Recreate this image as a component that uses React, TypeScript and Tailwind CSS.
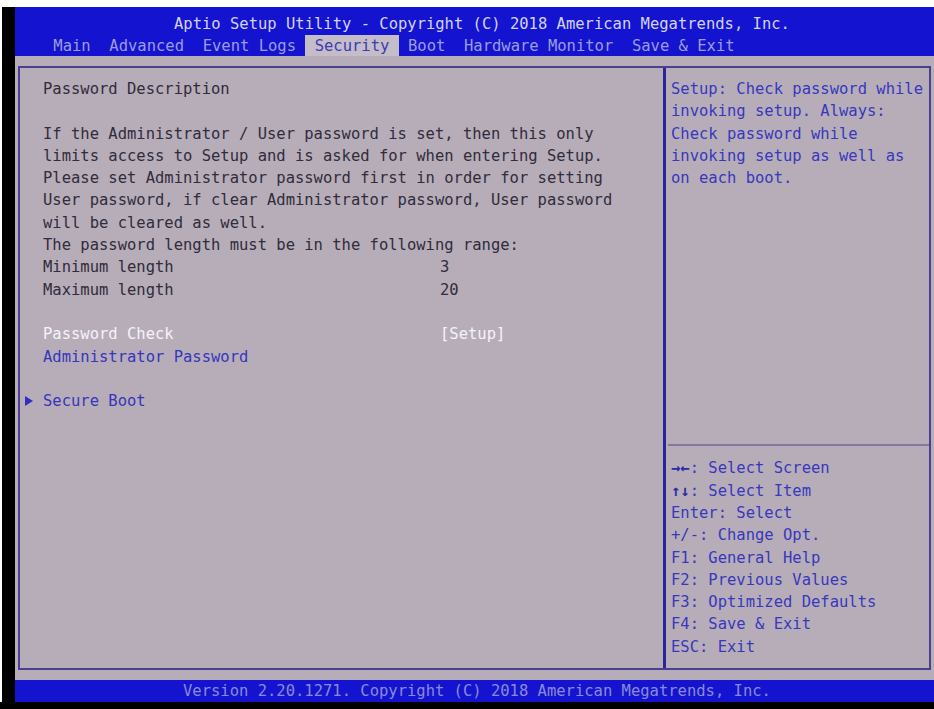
const tabs = ["Main", "Advanced", "Event Logs", "Security", "Boot", "Hardware Monitor", "Save & Exit"];

const description = [
  "If the Administrator / User password is set, then this only",
  "limits access to Setup and is asked for when entering Setup.",
  "Please set Administrator password first in order for setting",
  "User password, if clear Administrator password, User password",
  "will be cleared as well.",
  "The password length must be in the following range:",
];

const helpText = [
  "Setup: Check password while",
  "invoking setup. Always:",
  "Check password while",
  "invoking setup as well as",
  "on each boot.",
];

const keys: [string, string][] = [
  ["→←", ": Select Screen"],
  ["↑↓", ": Select Item"],
  ["", "Enter: Select"],
  ["", "+/-: Change Opt."],
  ["", "F1: General Help"],
  ["", "F2: Previous Values"],
  ["", "F3: Optimized Defaults"],
  ["", "F4: Save & Exit"],
  ["", "ESC: Exit"],
];

function Row({ label, value, className }: { label: string; value?: string; className?: string }) {
  return (
    <div className={`flex h-[22.3px] whitespace-pre ${className ?? ""}`}>
      <span className="w-[397px]">{label}</span>
      {value && <span>{value}</span>}
    </div>
  );
}

export default function App() {
  return (
    <div className="w-[934px] h-[709px] bg-black flex flex-col overflow-hidden font-['DejaVu_Sans_Mono',monospace] text-[15.5px] leading-[22.3px]">
      <div className="h-[7px] bg-white shrink-0" />
      <div className="flex flex-1 min-h-0">
        <div className="w-[2px] bg-white" />
        <div className="w-[13px] bg-black" />
        <div className="flex flex-col flex-1 min-w-0">
          {/* header */}
          <div className="h-[48.5px] bg-[#1414d0] pt-[6px] shrink-0">
            <div className="h-[21.5px] pl-[159px] whitespace-pre text-[#d2d2f4]">
              Aptio Setup Utility - Copyright (C) 2018 American Megatrends, Inc.
            </div>
            <div className="h-[21px] pl-[29px] whitespace-pre text-[#9c9cdc] flex">
              {tabs.map((t) =>
                t === "Security" ? (
                  <span key={t} className="bg-[#c4bcc8] text-[#3c3cb4]">{` ${t} `}</span>
                ) : (
                  <span key={t}>{` ${t} `}</span>
                )
              )}
            </div>
          </div>

          {/* body */}
          <div className="flex-1 min-h-0 bg-[#b7adb8] pt-[10.5px] pb-[10px] pl-[3px] pr-[3px]">
            <div className="h-full border-2 border-[#4b3f92] flex">
              <div className="w-[643px] pt-[10px] text-[#302c3c]">
                <div className="pl-[23px]">
                  <Row label="Password Description" />
                  <div className="h-[22.3px]" />
                  {description.map((l) => (
                    <Row key={l} label={l} />
                  ))}
                  <Row label="Minimum length" value="3" />
                  <Row label="Maximum length" value="20" />
                  <div className="h-[22.3px]" />
                  <Row label="Password Check" value="[Setup]" className="text-[#f6f2fa]" />
                  <Row label="Administrator Password" className="text-[#3636bc]" />
                  <div className="h-[22.3px]" />
                </div>
                <div className="flex h-[22.3px] items-center text-[#3636bc]">
                  <div className="w-[23px] pl-[5px]">
                    <svg width="8" height="10" viewBox="0 0 8 10">
                      <path d="M0 0 L8 5 L0 10 Z" fill="#3030c0" />
                    </svg>
                  </div>
                  <span className="whitespace-pre">Secure Boot</span>
                </div>
              </div>

              <div className="flex-1 border-l-[3px] border-[#2b2399] flex flex-col text-[#3838be]">
                <div className="pt-[10px] pl-[5px]">
                  {helpText.map((l) => (
                    <div key={l} className="h-[22.3px] whitespace-pre">{l}</div>
                  ))}
                </div>
                <div className="mt-auto ml-[2px] border-t-2 border-[#84789c] pt-[11px] pb-[10px] pl-[3px]">
                  {keys.map(([k, l]) => (
                    <div key={l} className="h-[22.3px] whitespace-pre">
                      {k && <span className="font-bold text-[#2a2aa8]">{k}</span>}
                      {l}
                    </div>
                  ))}
                </div>
              </div>
            </div>
          </div>

          {/* footer */}
          <div className="h-[22px] bg-[#1414d0] pl-[168px] whitespace-pre text-[#8a8ad4] shrink-0 leading-[22px]">
            Version 2.20.1271. Copyright (C) 2018 American Megatrends, Inc.
          </div>
        </div>
      </div>
      <div className="h-[7px] bg-black shrink-0" />
    </div>
  );
}
